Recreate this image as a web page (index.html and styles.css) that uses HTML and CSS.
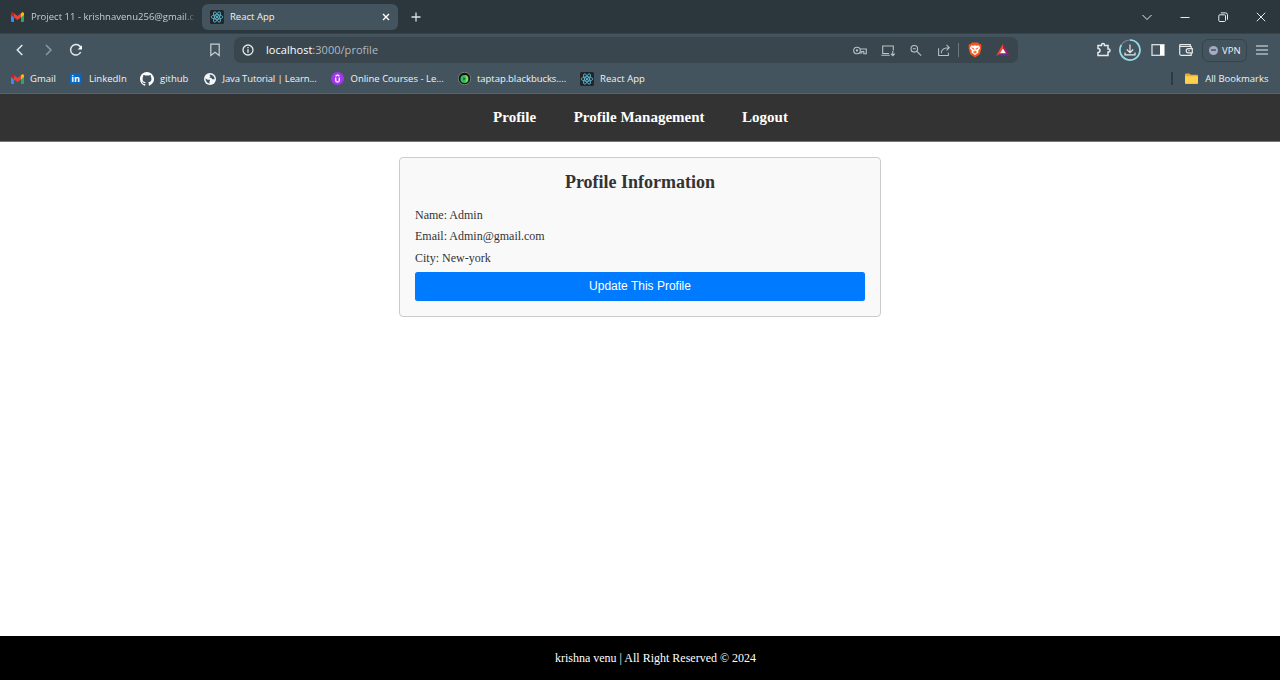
FILE: index.html
```html
<!DOCTYPE html>
<html lang="en">
<head>
<meta charset="utf-8">
<title>React App</title>
<link rel="stylesheet" href="styles.css">
</head>
<body>
<svg class="defs" aria-hidden="true">
  <symbol id="gmail" viewBox="0 0 13 10">
    <path d="M0 1.5V9q0 1 1 1h2V4.2z" fill="#4285f4"/>
    <path d="M13 1.5V9q0 1-1 1h-2V4.2z" fill="#34a853"/>
    <path d="M10 1.2 11.2.3Q13-.4 13 1.7V3l-3 2.4z" fill="#fbbc04"/>
    <path d="M3 1.2 6.5 4 10 1.2v4.2L6.5 8 3 5.4z" fill="#ea4335"/>
    <path d="M3 1.2 1.8.3Q0-.4 0 1.7V3l3 2.4z" fill="#c5221f"/>
  </symbol>
  <symbol id="react" viewBox="0 0 14 14">
    <rect width="14" height="14" rx="1.5" fill="#20262c"/>
    <g fill="none" stroke="#61c9e4" stroke-width=".75">
      <ellipse cx="7" cy="7" rx="5.8" ry="2.2"/>
      <ellipse cx="7" cy="7" rx="5.8" ry="2.2" transform="rotate(60 7 7)"/>
      <ellipse cx="7" cy="7" rx="5.8" ry="2.2" transform="rotate(120 7 7)"/>
    </g>
    <circle cx="7" cy="7" r="1.1" fill="#61c9e4"/>
  </symbol>
</svg>

<header class="browser">
  <div class="tabs">
    <div class="tab tab-idle">
      <svg class="ico-gmail"><use href="#gmail"/></svg>
      <span class="tab-title fade">Project 11 - krishnavenu256@gmail.c</span>
    </div>
    <div class="tab tab-active">
      <svg class="ico14"><use href="#react"/></svg>
      <span class="tab-title">React App</span>
      <svg class="close" viewBox="0 0 8 8"><path d="m1 1 6 6M7 1 1 7"/></svg>
    </div>
    <svg class="plus" viewBox="0 0 10 10"><path d="M5 .5v9M.5 5h9"/></svg>
    <div class="window-controls">
      <svg viewBox="0 0 12 12"><path d="m1.500 4 4.500 4.500L10.500 4"/></svg>
      <svg viewBox="0 0 12 12"><path d="M1.500 6.500h9"/></svg>
      <svg viewBox="0 0 12 12"><rect x="1.800" y="3.800" width="6.700" height="6.700" rx="1"/><path d="M3.800 1.900h4.800q1.900 0 1.900 1.900v4.900"/></svg>
      <svg viewBox="0 0 12 12"><path d="m1.800 1.800 8.400 8.400m0-8.400-8.400 8.400"/></svg>
    </div>
  </div>

  <div class="toolbar">
    <div class="history">
      <svg viewBox="0 0 14 14"><path d="M9.300 2 4.300 7l5 5"/></svg>
      <svg class="dim" viewBox="0 0 14 14"><path d="m5 2 5 5-5 5"/></svg>
      <svg viewBox="0 0 14 14"><path d="M11.700 9A5.300 5.300 0 1 1 12 5.300"/><path class="solid" d="M13 2.200v4.300H8.700z"/></svg>
    </div>
    <svg class="save" viewBox="0 0 12 14"><path d="M1.800 1.200h8.400v11.300L6 9.300l-4.200 3.200z"/></svg>
    <div class="address">
      <svg class="info" viewBox="0 0 12 12"><circle cx="6" cy="6" r="5"/><path d="M6 5.200v3.500M6 3.100v1.200"/></svg>
      <span class="url"><b>localhost</b>:3000/profile</span>
      <div class="address-actions">
        <svg viewBox="0 0 14 12"><circle cx="4" cy="6" r="3.300"/><circle cx="4" cy="6" r=".6"/><path d="M7 4.500h6.300v4.700h-2.500V7H8.700v1.500H6.500"/></svg>
        <svg viewBox="0 0 14 12"><path d="M8 9H1.700V1.500h10.600V6M.3 10.700h8.500M11.800 6.500v4.500M9.900 9.200l1.900 1.900 1.900-1.900"/></svg>
        <svg viewBox="0 0 14 12"><circle cx="5.300" cy="4.300" r="3.300"/><path d="m7.800 6.800 4.400 4.400M3.800 4.300h3"/></svg>
        <svg viewBox="0 0 14 14"><path d="M1.200 4.500v8h10.500V9.500M4 10q.2-6.200 8.500-6M9.700 1l3 3-3 3"/></svg>
      </div>
      <i class="divider"></i>
      <svg class="brave" viewBox="0 0 14 16"><path d="M4 .5h6l1.300 1.400h1.300l1 2.200-.5 1.300.3 1.200-1.600 5.700L7 15.500l-4.800-3.200L.6 6.600l.3-1.200L.4 4.100l1-2.200h1.300z" fill="#f1561d"/><path d="m3.300 3.500 2 .2L7 3.200l1.700.5 2-.2 1.500 2.600-2 3 .3 1.300L7 13l-3.500-2.600.3-1.300-2-3z" fill="#fff"/><path d="m3.500 5.700 2.300.7-.4 1.200zm7 0-2.300.7.4 1.200zM7 6.500v3M5.200 10 7 9.200 8.800 10 7 11.200z" fill="#f1561d" stroke="#f1561d" stroke-width=".4"/></svg>
      <svg class="bat" viewBox="0 0 14 12"><path d="M7 0 0 12l7-3.500z" fill="#ff4724"/><path d="m7 0 7 12-7-3.500z" fill="#9e1f63"/><path d="M0 12h14L7 8z" fill="#662d91"/><path d="m7 4.500 2.900 4.800H4.100z" fill="#fff"/></svg>
    </div>
    <div class="extensions">
      <svg class="puzzle" viewBox="0 0 16 16"><path d="M2 3.500h3.500V3q0-1.500 1.500-1.500T8.500 3v.5H12V7h.5Q14 7 14 8.500T12.500 10H12v3.500H2v-3q2 0 2-2t-2-2z"/></svg>
      <svg class="download" viewBox="0 0 22 22"><circle cx="11" cy="11" r="10" stroke="#78868c"/><path class="progress" d="M11 1A10 10 0 1 1 2.300 6"/><path d="M11 5.500v8M7.800 10.500l3.200 3.200 3.200-3.200M6 13.500v2.300h10v-2.300"/></svg>
      <svg class="sidebar" viewBox="0 0 14 12"><rect x="1" y=".700" width="12" height="10.600"/><path class="solid" d="M9 1h4v10H9z"/></svg>
      <svg class="wallet" viewBox="0 0 14 12"><path d="M12.200 4V2.500H1.700q-1 0-1-1t1-.9h9.600v1.900M.7 1.500v8.300q0 1.500 1.500 1.500h10V9"/><path d="M13.300 4.600H9.200q-2 0-2 2.100t2 2.100h4.100zM9.300 6.700h1.200"/></svg>
      <div class="vpn"><i class="vpn-dot"></i><span>VPN</span></div>
      <svg class="menu" viewBox="0 0 12 12"><path d="M0 2h12M0 6h12M0 10h12"/></svg>
    </div>
  </div>

  <div class="bookmarks">
    <div class="bookmark bm-gmail"><svg class="ico-gmail"><use href="#gmail"/></svg><span>Gmail</span></div>
    <div class="bookmark bm-linkedin"><i class="linkedin">in</i><span>LinkedIn</span></div>
    <div class="bookmark bm-github"><svg class="ico14" viewBox="0 0 16 16"><path fill="#fff" d="M8 0C3.580 0 0 3.580 0 8c0 3.540 2.290 6.530 5.470 7.590.4.070.55-.17.55-.38 0-.19-.01-.82-.01-1.490-2.010.37-2.530-.49-2.690-.94-.09-.23-.48-.94-.82-1.130-.28-.15-.68-.52-.01-.53.63-.01 1.080.58 1.230.82.72 1.210 1.870.87 2.330.66.070-.52.28-.87.51-1.070-1.780-.2-3.640-.89-3.640-3.950 0-.87.31-1.590.82-2.150-.08-.2-.36-1.020.08-2.120 0 0 .67-.21 2.200.82a7.600 7.600 0 0 1 4 0c1.530-1.040 2.200-.82 2.200-.82.44 1.100.16 1.920.08 2.120.51.56.82 1.270.82 2.150 0 3.070-1.870 3.750-3.650 3.950.29.25.54.73.54 1.480 0 1.070-.01 1.930-.01 2.200 0 .21.15.46.55.38A8 8 0 0 0 8 0z"/></svg><span>github</span></div>
    <div class="bookmark bm-java"><svg class="globe" viewBox="0 0 12 12"><circle cx="6" cy="6" r="6" fill="#f4f6f7"/><path d="M1.500 5.200q2 2.100 4.200 1.300.8 1.500-.4 2.300l.4 1.800Q1.500 9.700 1.500 5.200zM6 1.400q-1 1.300.5 1.800L5.300 4.600q2.700 0 3 1.700h2.400Q10.500 1.800 6 1.400z" fill="#43545e"/></svg><span>Java Tutorial | Learn...</span></div>
    <div class="bookmark bm-courses"><svg class="udemy" viewBox="0 0 13 13"><circle cx="6.500" cy="6.500" r="6.500" fill="#a435f0"/><path d="M4.600 4.100 6.500 3l1.900 1.100M4.700 5.600v3q0 1.500 1.800 1.500t1.800-1.500v-3" fill="none" stroke="#fff" stroke-width="1.300"/></svg><span>Online Courses - Le...</span></div>
    <div class="bookmark bm-taptap"><svg class="taptap" viewBox="0 0 13 13"><circle cx="6.500" cy="6.500" r="6.200" fill="#101513" stroke="#a5b1ab" stroke-width=".6"/><circle cx="6.500" cy="6.900" r="4" fill="#36bd60"/><path d="M7 3a4 4 0 0 1 0 7.700Q10 7 7 3z" fill="#9ae54d"/><path d="M5.400 5v3.500l2-1.700z" fill="#145532"/></svg><span>taptap.blackbucks....</span></div>
    <div class="bookmark bm-react"><svg class="ico14"><use href="#react"/></svg><span>React App</span></div>
    <div class="all-bookmarks">
      <svg class="folder" viewBox="0 0 13 11"><path d="M0 1.500q0-1 1-1h3.300l1.400 1.300H12q1 0 1 1V10q0 .8-1 .8H1q-1 0-1-.8z" fill="#e8ae2d"/><path d="M0 3.200h13V10q0 .8-1 .8H1q-1 0-1-.8z" fill="#ffd04e"/></svg>
      <span>All Bookmarks</span>
    </div>
  </div>
</header>

<nav class="site-nav"><a>Profile</a><a>Profile Management</a><a>Logout</a></nav>

<main class="content">
  <section class="card">
    <h2>Profile Information</h2>
    <p>Name: Admin</p>
    <p>Email: Admin@gmail.com</p>
    <p>City: New-york</p>
    <button>Update This Profile</button>
  </section>
</main>

<footer class="site-footer">krishna venu | All Right Reserved © 2024</footer>
</body>
</html>
```

FILE: styles.css
```css
* { box-sizing: border-box; }

body {
  margin: 0;
  height: 680px;
  display: flex;
  flex-direction: column;
  overflow: hidden;
  background: #fff;
  font-family: "Liberation Serif", serif;
}

svg { display: block; flex: none; fill: none; stroke: none; }
.defs { position: absolute; width: 0; height: 0; }

/* Browser window */
.browser {
  flex: none;
  height: 94px;
  background: #44545e;
  border-bottom: 1px solid #59656c;
  color: #f0f3f5;
  font-family: "Open Sans", sans-serif;
  font-size: 9.5px;
  white-space: nowrap;
}

.tabs {
  display: flex;
  align-items: center;
  height: 34px;
  background: #2c373d;
  border-bottom: 1px solid #36434a;
}
.tab { display: flex; align-items: center; height: 26px; }
.tab-idle { width: 202px; padding-left: 11px; color: #c5cdd1; }
.tab-active { width: 196px; padding: 0 8px; border-radius: 6px; background: #44545e; }
.tab-title { margin-left: 6px; }
.tab-idle .tab-title { margin-left: 7px; letter-spacing: .01px; }
.fade { mask-image: linear-gradient(to right, #000 94%, rgba(0, 0, 0, .15)); }
.ico-gmail { width: 13px; height: 10px; }
.ico14 { width: 14px; height: 14px; }
.close { width: 8px; height: 8px; margin-left: auto; stroke: #fff; stroke-width: 1.4; }
.plus { width: 10px; height: 10px; margin-left: 12.5px; stroke: #dbe1e4; stroke-width: 1.3; }
.window-controls { display: flex; gap: 26px; margin: 0 13px 0 auto; }
.window-controls svg { width: 12px; height: 12px; stroke: #e6eaec; stroke-width: 1; }

.toolbar { display: flex; align-items: center; height: 32px; }
.toolbar svg { stroke: #e5eaed; stroke-width: 1.2; }
.toolbar .solid { fill: #fff; stroke: none; }
.history { display: flex; gap: 14px; margin-left: 12.5px; }
.history svg { width: 14px; height: 14px; stroke-width: 1.5; }
.toolbar .dim { stroke: #8d999f; }
.toolbar .save { width: 12px; height: 14px; margin-left: 126.5px; stroke: #c7d0d4; }
.address {
  display: flex;
  align-items: center;
  width: 784px;
  height: 26px;
  margin-left: 13px;
  padding: 0 8.500px 0 7.500px;
  border-radius: 7px;
  background: #39464e;
}
.toolbar .info { width: 12px; height: 12px; stroke-width: 1.3; }
.url { margin: -1px 0 0 12.500px; color: #b0babf; font-size: 11px; letter-spacing: .03px; }
.url b { color: #fff; font-weight: 400; }
.address-actions { display: flex; align-items: center; gap: 14px; margin-left: auto; }
.address-actions svg { width: 14px; height: 13px; stroke: #b9c2c6; stroke-width: 1.1; }
.divider { width: 1px; height: 14px; margin: 0 9px 0 7px; background: #6d7980; }
.address .brave { width: 14px; height: 16px; stroke: none; }
.address .bat { width: 14px; height: 12px; margin-left: 14px; stroke: none; }

.extensions { display: flex; align-items: center; margin: 0 12px 0 auto; }
.toolbar .puzzle { width: 16px; height: 16px; stroke-width: 1.5; }
.download { width: 22px; height: 22px; margin-left: 7px; }
.toolbar .progress { stroke: #94dce5; stroke-width: 1.7; }
.sidebar { width: 14px; height: 12px; margin-left: 10px; }
.wallet { width: 14px; height: 12px; margin-left: 14px; }
.vpn {
  display: flex;
  align-items: center;
  gap: 4px;
  width: 45px;
  height: 23px;
  margin: 0 9px;
  padding-left: 6px;
  border: 1px solid #35434b;
  border-radius: 6px;
}
.vpn-dot { display: flex; align-items: center; width: 9px; height: 9px; border-radius: 50%; background: #a5abc0; }
.vpn-dot::after { content: ""; width: 5px; height: 2px; margin: auto; background: #5e6879; }
.menu { width: 12px; height: 12px; }

.bookmarks { display: flex; align-items: center; height: 27px; padding: 0 11.500px 2px 11px; }
.bookmark { display: flex; flex: none; align-items: center; gap: 6px; }
.bm-gmail { width: 59px; }
.bm-linkedin { width: 70px; gap: 8px; }
.bm-github { width: 63.500px; }
.bm-java { width: 127.500px; gap: 7px; letter-spacing: -.14px; }
.bm-courses { width: 127px; gap: 6.500px; }
.bm-taptap { width: 122px; letter-spacing: -.05px; }
.bm-react { letter-spacing: .05px; }
.linkedin {
  width: 11px;
  height: 11px;
  background: #0b66c2;
  color: #fff;
  font: bold 9px/11px "Open Sans", sans-serif;
  text-align: center;
}
.globe { width: 12px; height: 12px; }
.udemy, .taptap { width: 13px; height: 13px; }
.all-bookmarks {
  display: flex;
  align-items: center;
  gap: 7px;
  margin-left: auto;
  padding-left: 12px;
  border-left: 2px solid #2e3a41;
  line-height: 13px;
}
.folder { width: 13px; height: 11px; }

/* Page */
.site-nav {
  display: flex;
  flex: none;
  justify-content: center;
  gap: 37.500px;
  height: 48px;
  padding-left: 1px;
  border-bottom: 1px solid #777;
  background: #333;
  color: #fff;
  font-size: 15px;
  font-weight: 700;
  line-height: 47px;
}
.content { flex: 1; padding-top: 15px; }
.card {
  width: 482px;
  height: 160px;
  margin: 0 auto;
  padding: 14px 15px 15px;
  border: 1px solid #ccc;
  border-radius: 4px;
  background: #f9f9f9;
  color: #333;
}
.card h2 { margin: 0 0 16px; font-size: 18px; line-height: 20px; text-align: center; }
.card p { margin: 0 0 7.400px; font-size: 12px; line-height: 14px; }
.card button {
  display: block;
  width: 100%;
  height: 29px;
  margin-top: -.200px;
  padding: 0 0 1px;
  border: 0;
  border-radius: 2.5px;
  background: #007bff;
  color: #fff;
  font: 12px "Liberation Sans", Arial, sans-serif;
}
.site-footer {
  flex: none;
  height: 44px;
  padding-left: 31px;
  background: #000;
  color: #fff;
  font-size: 12px;
  line-height: 45px;
  text-align: center;
}
```
